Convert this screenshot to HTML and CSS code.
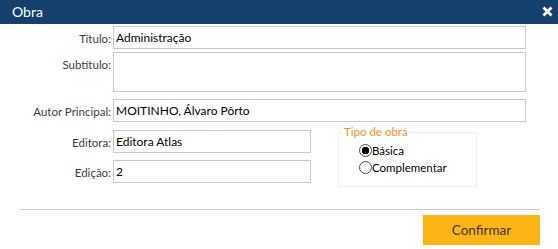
FILE: index.html
```html
<html>

<head>
  <meta content="text/html;charset=utf-8" http-equiv="Content-Type" />
  <link rel="stylesheet" href="styles.css">
</head>

<body>
  <div class="titlebar">
    <span class="title">Obra</span>
    <div class="spacer"></div>
    <svg class="close" width="11" height="11" viewBox="0 0 11 11">
      <path d="M1.5 1.5 L9.5 9.5 M9.5 1.5 L1.5 9.5" stroke="#fff" stroke-width="2.8" />
    </svg>
  </div>

  <form onSubmit="return false">
    <div class="fields">
      <div class="row">
        <label for="titulo">Título:</label>
        <input type="text" id="titulo" value="Administração" />
      </div>
      <div class="row row-tall">
        <label for="subtitulo">Subtítulo:</label>
        <textarea id="subtitulo"></textarea>
      </div>
      <div class="row row-autor">
        <label for="autor">Autor Principal:</label>
        <input type="text" id="autor" value="MOITINHO, Álvaro Pôrto" />
      </div>

      <div class="split">
        <div class="col">
          <div class="row">
            <label for="editora">Editora:</label>
            <input type="text" id="editora" class="short" value="Editora Atlas" />
          </div>
          <div class="row row-edicao">
            <label for="edicao">Edição:</label>
            <input type="text" id="edicao" class="short" value="2" />
          </div>
        </div>

        <fieldset>
          <legend>Tipo de obra</legend>
          <div class="options">
            <div class="option">
              <input type="radio" name="tipo" id="basica" value="basica" checked />
              <label for="basica">Básica</label>
            </div>
            <div class="option">
              <input type="radio" name="tipo" id="complementar" value="complementar" />
              <label for="complementar">Complementar</label>
            </div>
          </div>
        </fieldset>
      </div>
    </div>

    <hr />

    <div class="buttons">
      <button type="submit">Confirmar</button>
    </div>
  </form>
</body>

</html>
```

FILE: styles.css
```css
html {
  margin: 0;
  font-family: "Lato", "Open Sans", sans-serif;
}

body {
  margin: 0;
  width: 558px;
  height: 249px;
  background-color: #ffffff;
  overflow: hidden;
}

form {
  margin: 0;
  padding: 0;
}

.titlebar {
  display: flex;
  align-items: center;
  height: 24px;
  padding: 0 5px 0 12px;
  background-color: #15406b;
  color: #ffffff;
}

.titlebar .title {
  font-size: 14px;
  line-height: 1;
}

.titlebar .spacer {
  flex-grow: 1;
}

.titlebar .close {
  display: block;
  margin-top: -2px;
}

.fields {
  padding: 2px 32px 0 0;
}

.row {
  display: flex;
  height: 23px;
}

.row label {
  width: 111px;
  padding-right: 2px;
  padding-top: 6px;
  text-align: right;
  font-size: 11.5px;
  line-height: 14px;
  color: #3c3c3c;
}

.row-tall {
  height: 40px;
  margin-top: 3px;
}

.row-autor {
  margin-top: 7px;
}

.row-edicao {
  margin-top: 7px;
}

input[type=text],
textarea {
  flex-grow: 1;
  box-sizing: border-box;
  height: 100%;
  margin: 0;
  padding: 0 2px;
  border: 1px solid #c8c8c8;
  border-radius: 0;
  outline: none;
  font-family: inherit;
  font-size: 12px;
  color: #000000;
  resize: none;
}

input.short {
  flex-grow: 0;
  width: 198px;
}

.split {
  display: flex;
  margin-top: 3px;
}

.col {
  padding-top: 5px;
}

fieldset {
  box-sizing: border-box;
  width: 139px;
  margin: 0 0 0 27px;
  padding: 0;
  border: 1px dotted #dcdcdc;
}

legend {
  margin-left: 3px;
  padding: 0 2px;
  font-size: 11.5px;
  line-height: 14px;
  color: #f7901e;
}

.options {
  padding: 3px 0 10px 20px;
}

.option {
  display: flex;
  align-items: center;
  height: 17px;
}

.option label {
  font-size: 11.5px;
  color: #000000;
}

input[type=radio] {
  appearance: none;
  box-sizing: border-box;
  width: 13px;
  height: 13px;
  margin: 0;
  border: 1px solid #4a4a4a;
  border-radius: 50%;
  background-color: #ffffff;
}

input[type=radio]:checked {
  background: radial-gradient(circle, #000000 0, #000000 3.5px, #ffffff 4px);
}

hr {
  margin: 22px 18px 0 20px;
  border: none;
  border-top: 1px solid #cccccc;
}

.buttons {
  display: flex;
  justify-content: flex-end;
  margin: 5px 18px 0 0;
}

button {
  width: 117px;
  height: 30px;
  border: none;
  border-radius: 0;
  background-color: #fdb515;
  font-family: inherit;
  font-size: 13.5px;
  color: #3a3a3a;
}
```
